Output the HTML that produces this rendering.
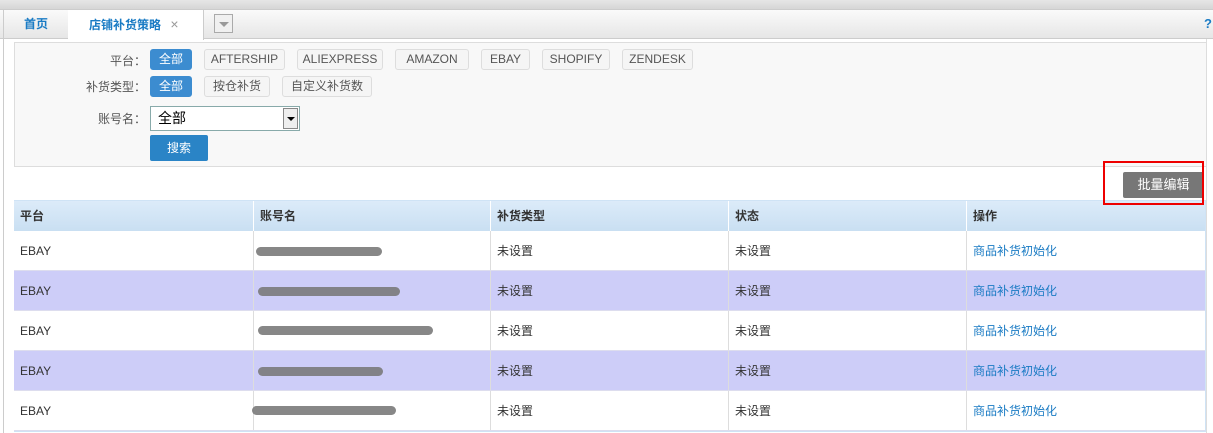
<!DOCTYPE html><html><head><meta charset="utf-8"><style>
*{box-sizing:border-box;margin:0;padding:0}
body{width:1213px;height:433px;overflow:hidden;background:#fff;font-family:"Liberation Sans","Noto Sans CJK SC",sans-serif;font-size:12px;color:#333;position:relative}
.a{position:absolute}
.btn{position:absolute;height:21px;border:1px solid #ddd;border-radius:3px;background:#f5f5f5;color:#555;font-size:12px;line-height:19px;text-align:center}
.sel{background:#3c8cd0;border-color:#3c8cd0;color:#fff}
.lbl{position:absolute;text-align:right;color:#555;font-size:12px}
.row{position:absolute;left:14px;width:1191px;height:40px;border-bottom:1px solid #dde}
.row div,.hd div{position:absolute;top:0;height:100%;border-left:1px solid #ddd;padding-left:6px;line-height:40px}
.blob{position:absolute;height:9px;background:#7a7a7a;border-radius:5px;opacity:.9}
</style></head><body>
<div class="a" style="left:0;top:0;width:1213px;height:9px;background:linear-gradient(#e6e6e6,#d6d6d6)"></div>
<div class="a" style="left:0;top:9px;width:1213px;height:30px;background:linear-gradient(#fafafa,#e6e6e6);border-top:1px solid #ccc;border-bottom:1px solid #ccc"></div>
<div class="a" style="left:3px;top:10px;width:66px;height:28px;border-right:1px solid #ccc;border-left:1px solid #ccc;color:#1a7bc4;font-weight:bold;line-height:28px;text-align:center;font-size:12px">首页</div>
<div class="a" style="left:68px;top:10px;width:136px;height:30px;background:#fff;border-right:1px solid #ccc;color:#1a7bc4;font-weight:bold;line-height:28px;padding-left:21px;font-size:12px">店铺补货策略 <span style="color:#999;font-weight:normal;margin-left:6px;font-size:14px">×</span></div>
<div class="a" style="left:214px;top:14px;width:19px;height:19px;border:1px solid #aaa;background:#f0f0f0"><div class="a" style="left:4px;top:7px;border-left:5px solid transparent;border-right:5px solid transparent;border-top:5px solid #999"></div></div>
<div class="a" style="left:1204px;top:16px;color:#1a7bc4;font-weight:bold;font-size:13px">?</div>
<div class="a" style="left:3px;top:39px;width:1px;height:394px;background:#ccc"></div>
<div class="a" style="left:1206px;top:39px;width:1px;height:394px;background:#ddd"></div>
<div class="a" style="left:14px;top:42px;width:1193px;height:125px;background:#f8f8f8;border:1px solid #ddd"></div>
<div class="lbl" style="left:60px;top:52px;width:86px">平台：</div>
<div class="btn sel" style="left:150px;top:49px;width:42px">全部</div>
<div class="btn" style="left:204px;top:49px;width:81px">AFTERSHIP</div>
<div class="btn" style="left:297px;top:49px;width:86px">ALIEXPRESS</div>
<div class="btn" style="left:395px;top:49px;width:74px">AMAZON</div>
<div class="btn" style="left:481px;top:49px;width:49px">EBAY</div>
<div class="btn" style="left:542px;top:49px;width:68px">SHOPIFY</div>
<div class="btn" style="left:622px;top:49px;width:71px">ZENDESK</div>
<div class="lbl" style="left:60px;top:78px;width:86px">补货类型：</div>
<div class="btn sel" style="left:150px;top:76px;width:42px">全部</div>
<div class="btn" style="left:204px;top:76px;width:66px">按仓补货</div>
<div class="btn" style="left:282px;top:76px;width:90px">自定义补货数</div>
<div class="lbl" style="left:60px;top:110px;width:86px">账号名：</div>
<div class="a" style="left:150px;top:106px;width:150px;height:25px;border:1px solid #8aa;background:#fff;font-size:14px;line-height:23px;padding-left:7px;color:#000">全部</div>
<div class="a" style="left:283px;top:108px;width:15px;height:21px;border:1px solid #888;background:#eee"><div class="a" style="left:3px;top:8px;border-left:4px solid transparent;border-right:4px solid transparent;border-top:4px solid #000"></div></div>
<div class="a" style="left:150px;top:135px;width:58px;height:26px;background:#2a84c6;border-radius:2px;color:#fff;text-align:center;line-height:26px">搜索</div>
<div class="a" style="left:14px;top:200px;width:1192px;height:232px;border:1px solid #cfe3f5"></div>
<div class="row hd" style="top:201px;height:30px;background:linear-gradient(#dcebf9,#c9dff2);font-weight:bold;border:none">
<div style="left:0;border:none;line-height:30px">平台</div><div style="left:239px;line-height:30px;border-color:#fff">账号名</div><div style="left:476px;line-height:30px;border-color:#fff">补货类型</div><div style="left:714px;line-height:30px;border-color:#fff">状态</div><div style="left:952px;line-height:30px;border-color:#fff">操作</div></div>
<div class="row" style="top:231px;background:#fff"><div style="left:0;border:none">EBAY</div><div style="left:239px"></div><div style="left:476px">未设置</div><div style="left:714px">未设置</div><div style="left:952px;color:#1a7bc4">商品补货初始化</div></div>
<div class="row" style="top:271px;background:#cdcdf8"><div style="left:0;border:none">EBAY</div><div style="left:239px"></div><div style="left:476px">未设置</div><div style="left:714px">未设置</div><div style="left:952px;color:#1a7bc4">商品补货初始化</div></div>
<div class="row" style="top:311px;background:#fff"><div style="left:0;border:none">EBAY</div><div style="left:239px"></div><div style="left:476px">未设置</div><div style="left:714px">未设置</div><div style="left:952px;color:#1a7bc4">商品补货初始化</div></div>
<div class="row" style="top:351px;background:#cdcdf8"><div style="left:0;border:none">EBAY</div><div style="left:239px"></div><div style="left:476px">未设置</div><div style="left:714px">未设置</div><div style="left:952px;color:#1a7bc4">商品补货初始化</div></div>
<div class="row" style="top:391px;background:#fff"><div style="left:0;border:none">EBAY</div><div style="left:239px"></div><div style="left:476px">未设置</div><div style="left:714px">未设置</div><div style="left:952px;color:#1a7bc4">商品补货初始化</div></div>
<div class="blob" style="left:256px;top:247px;width:126px"></div>
<div class="blob" style="left:258px;top:287px;width:142px"></div>
<div class="blob" style="left:258px;top:326px;width:175px"></div>
<div class="blob" style="left:258px;top:367px;width:125px"></div>
<div class="blob" style="left:252px;top:406px;width:144px"></div>
<div class="a" style="left:1123px;top:172px;width:81px;height:26px;background:#777;border-radius:2px;color:#fff;text-align:center;line-height:26px;font-size:13px">批量编辑</div>
<div class="a" style="left:1103px;top:161px;width:101px;height:44px;border:2px solid #e00"></div>
</body></html>
